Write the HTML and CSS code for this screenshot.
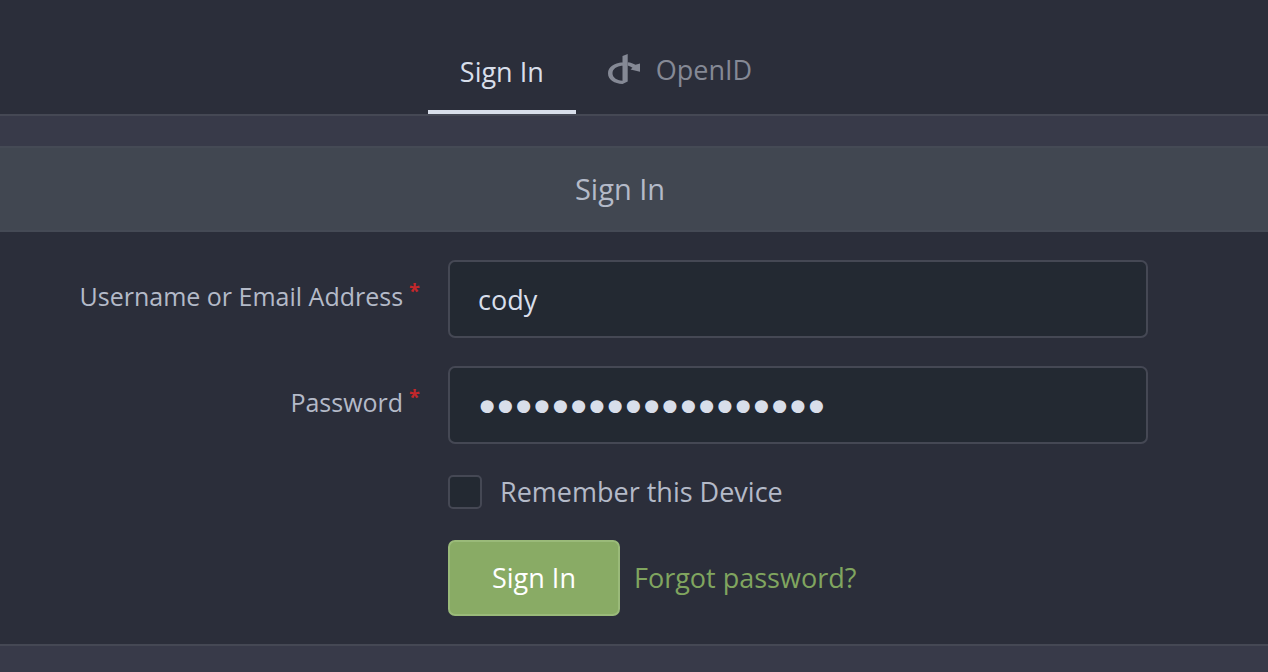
FILE: index.html
```html
<!DOCTYPE html>
<html lang="en">
<head>
<meta charset="utf-8">
<meta name="viewport" content="width=device-width, initial-scale=1">
<title>Sign In</title>
<link rel="stylesheet" href="styles.css">
</head>
<body>
<nav class="tabs">
  <a class="tab tab-active" href="#signin">Sign In</a>
  <a class="tab" href="#openid">
    <svg class="tab-icon" viewBox="0 0 32 32" aria-hidden="true">
      <path d="M14.500 2 19.700 0v27.500L14.500 30C6.500 29.500 0 26 0 19.200 0 13 6 9 14.500 8.200v3.300C8.500 12.300 4.500 15 4.500 19.200c0 4.300 4 6.900 10 7.600z"/>
      <path d="M19.700 8.200c3 .3 5.800 1.300 7.800 2.500L32 9.500v8.300L22.500 15.500l2-1.700c-1.500-1-3-1.700-4.800-2.200z"/>
    </svg>
    <span>OpenID</span>
  </a>
</nav>
<main class="panel">
  <h1 class="panel-title">Sign In</h1>
  <form class="form">
    <label class="label" for="user">Username or Email Address<span class="required">*</span></label>
    <input class="input" id="user" type="text" value="cody" required>
    <label class="label" for="pass">Password<span class="required">*</span></label>
    <input class="input input-password" id="pass" type="password" value="correct-horse-batte" required>
    <div class="remember">
      <input class="checkbox" id="remember" type="checkbox">
      <label for="remember">Remember this Device</label>
    </div>
    <div class="actions">
      <button class="button" type="submit">Sign In</button>
      <a class="forgot" href="#forgot">Forgot password?</a>
    </div>
  </form>
</main>
</body>
</html>
```

FILE: styles.css
```css
* { box-sizing: border-box; }
body {
  margin: 0;
  background: #383a49;
  color: #b4bac8;
  font: 27px/40px "Open Sans", "Noto Sans", sans-serif;
}
.tabs {
  display: flex;
  justify-content: center;
  padding: 28px 56px 0 0;
  background: #2b2e3a;
  border-bottom: 2px solid #454854;
}
.tab {
  display: flex;
  align-items: center;
  gap: 16px;
  height: 86px;
  padding: 0 32px 2px;
  color: #858995;
  text-decoration: none;
}
.tab-active {
  padding-top: 8px;
  color: #d8deea;
  border-bottom: 4px solid #d8deea;
}
.tab-icon { width: 32px; height: 32px; fill: currentColor; }
.panel {
  margin-top: 30px;
  background: #2b2e3a;
  border-bottom: 2px solid #454854;
}
.panel-title {
  margin: 0;
  padding: 21px 28px 21px 0;
  background: #414751;
  border: solid #454a55;
  border-width: 2px 0;
  font-size: 29px;
  font-weight: 400;
  text-align: center;
}
.form {
  display: grid;
  grid-template-columns: 14fr 25fr;
  gap: 28px;
  padding: 28px 120px 28px 28px;
}
.label {
  padding-top: 16px;
  font-size: 25px;
  text-align: right;
}
.required {
  margin-left: 6px;
  color: #c3272b;
  font-size: 20px;
  font-weight: 700;
  line-height: 20px;
  vertical-align: 8px;
}
.input {
  width: 100%;
  height: 78px;
  padding: 0 28px;
  color: #d8deea;
  background: #232932;
  border: 2px solid #454854;
  border-radius: 7px;
  font: inherit;
}
.input-password {
  padding-top: 4px;
  font: 31px/40px "DejaVu Sans", sans-serif;
  -webkit-text-stroke: 4px #d8deea;
}
.remember, .actions {
  grid-column: 2;
  display: flex;
  align-items: center;
}
.remember { gap: 18px; height: 40px; }
.checkbox {
  appearance: none;
  width: 34px;
  height: 34px;
  margin: 0;
  background: #232932;
  border: 2px solid #454854;
  border-radius: 5px;
}
.actions { gap: 14px; }
.button {
  height: 76px;
  padding: 0 42px;
  color: #fff;
  background: #89ab65;
  border: 2px solid #9aba79;
  border-radius: 7px;
  font: inherit;
}
.forgot { color: #80a55f; text-decoration: none; }
```
